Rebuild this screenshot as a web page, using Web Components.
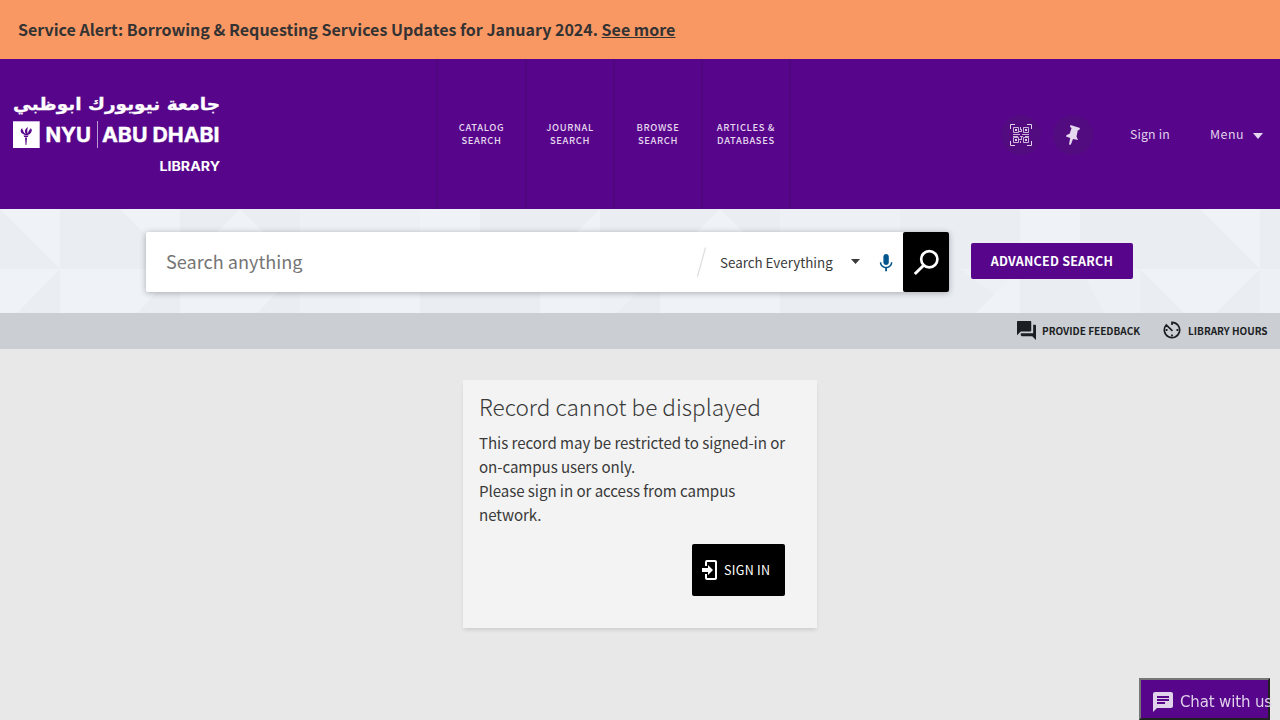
<!DOCTYPE html>
<html lang="en"><head><meta charset="utf-8"><title>NYU Abu Dhabi Library</title>
<style>
html,body{margin:0;height:100%;overflow:hidden}
body{background:#e8e8e8;color:#3a3a3a;font-family:"Noto Sans CJK SC","Open Sans",sans-serif}
</style></head><body>
<library-app></library-app>
<script>
const define=(name,html)=>customElements.define(name,class extends HTMLElement{
  constructor(){super();this.attachShadow({mode:'open'}).innerHTML=html}
});

define('service-alert',`<style>
:host{display:flex;align-items:center;height:59px;box-sizing:border-box;padding:0 18px 2px;background:#fa9864;color:#333;font-size:16.02px;font-weight:700;line-height:24px;white-space:pre}
a{text-decoration:underline;color:inherit}
</style><span><slot></slot><a>See more</a></span>`);

define('library-logo',`<style>:host{display:block;width:240px;height:150px}svg{display:block}</style>
<svg width="240" height="150" viewBox="0 59 240 150" fill="#fff">
<text x="220" y="109.500" direction="rtl" font-family="DejaVu Sans" font-weight="700" font-size="17" stroke="#fff" stroke-width=".3" textLength="207" lengthAdjust="spacingAndGlyphs">جامعة نيويورك ابوظبي</text>
<rect x="13" y="121.300" width="26.700" height="26.700"/>
<g fill="#57068c"><path d="M23.500 135.500h5l-.7 1.500h-3.600zM25 137.400h2l-.6 7.600h-.8z"/><path d="M25 135c-3-1-4-4-2-6 0 3 1 4 3 5-2-3-1-5 2-7-1 3-1 5 0 7 0-2 1-4 3-6 0 4-1 6-3 7z"/><path d="M22 133.500c-2-2-1.500-4.500.5-5.500-1 2 0 4 1.500 5.500zM29 134.500c2-1 3-3 3-6-1 2-3 3-4 5z"/></g>
<text x="45.500" y="142" font-family="Inter" font-weight="700" font-size="20" stroke="#fff" stroke-width=".4" textLength="45.500" lengthAdjust="spacingAndGlyphs">NYU</text>
<rect x="97" y="121" width="1" height="27" opacity=".6"/>
<text x="102" y="142" font-family="Inter" font-weight="700" font-size="20" stroke="#fff" stroke-width=".4" textLength="117.500" lengthAdjust="spacingAndGlyphs">ABU DHABI</text>
<text x="159.500" y="171" font-family="Inter" font-weight="700" font-size="12.500" textLength="60.500" lengthAdjust="spacingAndGlyphs">LIBRARY</text>
</svg>`);

define('nav-link',`<style>
:host{display:flex;width:88px;box-sizing:border-box;border-right:2px solid #50067f;align-items:center;justify-content:center;text-align:center;font-size:9.400px;line-height:13px;font-weight:500;letter-spacing:.65px;color:#e6daee}
:host(:first-child){border-left:2px solid #50067f;width:91px}
</style><span><slot></slot></span>`);

define('round-button',`<style>
:host{display:flex;width:40px;height:40px;border-radius:50%;background:#530b80;align-items:center;justify-content:center}
</style><slot></slot>`);

define('site-header',`<style>
:host{display:flex;height:150px;background:#57068c;color:#e0d2ea}
nav{display:flex;margin-left:196px}
.user{display:flex;align-items:center;margin-left:auto;font-size:12.500px;letter-spacing:.5px;line-height:20px;padding-right:17px;white-space:nowrap}
round-button{margin-top:2px}
round-button+round-button{margin-left:12px}
.in{margin-left:37px;width:80px;font-size:12.300px;letter-spacing:.15px}
.menu{width:43px;font-size:12.400px}
svg{display:block}
.caret{margin-top:3px}
</style>
<library-logo></library-logo>
<nav><nav-link>CATALOG<br>SEARCH</nav-link><nav-link>JOURNAL<br>SEARCH</nav-link><nav-link>BROWSE<br>SEARCH</nav-link><nav-link>ARTICLES &amp;<br>DATABASES</nav-link></nav>
<div class="user">
<round-button><svg width="22" height="22" viewBox="0 0 22 22" fill="none" stroke="#e0d2ea"><path d="M.5 5V.5H5M17 .5h4.500V5M21.500 17v4.500H17M5 21.500H.5V17"/><path stroke-opacity=".85" d="M3.500 3.500h5v5h-5zM13.500 3.500h5v5h-5zM3.500 13.500h5v5h-5zM13.500 13.500h5v5h-5zM10.500 3v3M11.500 5v3M9 7.500h2M3 10.500h7M12 10.500h7M3 12.500h5M10 12.500h3M15 12.500h4M11.500 13v3M9 15.500h2M10.500 17v2"/><path fill="#e0d2ea" stroke="none" d="M5 5h2v2H5zM15 5h2v2h-2zM5 15h2v2H5zM15 15h2v2h-2z"/></svg></round-button>
<round-button><svg width="20" height="20" viewBox="0 0 20 20" fill="#e5d8ef"><path d="M7.500 0l9.500 3-.8 2.200-1.300-.1-1.400 6.400 1.500 3.500-5-1-2.200 5.800-1.800-.4 1.200-6.300L3 11.500l.6-1.500 3-1.200L8.600 3 7 2z"/></svg></round-button>
<span class="in">Sign in</span><span class="menu">Menu</span>
<svg class="caret" width="10" height="6" viewBox="0 0 10 6"><path fill="#e5d8ef" d="M0 0h10L5 6z"/></svg>
</div>`);

define('search-box',`<style>
:host{display:flex;width:803px;height:60px;box-sizing:border-box;background:#fff;border-radius:2px;box-shadow:0 1px 6px rgba(0,0,0,.3);align-items:center;color:#3a3a3a}
.q{margin-left:20px;width:531px;font-size:18.100px;line-height:28px;padding-bottom:2px;color:#757575}
.scope{margin-left:14px;width:131px;font-size:13.360px;line-height:20px;padding-top:2px;white-space:nowrap}
.mic{margin:2px 0 0 16px}
button{display:flex;align-items:center;justify-content:center;border:0;padding:0;width:46px;height:60px;background:#000;border-radius:2px;margin-left:auto}
svg{display:block}
.caret{margin-bottom:2px}
</style>
<span class="q">Search anything</span>
<svg width="9" height="30" viewBox="0 0 9 30"><path d="M8.500.5L.5 29.500" stroke="#ddd" stroke-width="1.200"/></svg>
<span class="scope">Search Everything</span>
<svg class="caret" width="9" height="5" viewBox="0 0 9 5"><path fill="#3a3a3a" d="M0 0h9L4.500 5z"/></svg>
<svg class="mic" width="20" height="22" viewBox="2 1 20 22"><g fill="#00558c" transform="translate(1.300 1.300) scale(.9)"><path d="M12 14c1.700 0 3-1.300 3-3V5c0-1.700-1.300-3-3-3S9 3.300 9 5v6c0 1.700 1.300 3 3 3z"/><path d="M17.300 11c0 3-2.500 5.100-5.300 5.100S6.700 14 6.700 11H5c0 3.400 2.700 6.200 6 6.700V21h2v-3.300c3.300-.5 6-3.300 6-6.700z"/></g></svg>
<button aria-label="Search"><svg width="26" height="28" viewBox="0 0 26 28" fill="none" stroke="#fff"><circle cx="16.300" cy="11.300" r="8.100" stroke-width="2.700"/><path d="M11 17L1.800 26" stroke-width="3"/></svg></button>`);

define('search-band',`<style>
:host{display:grid;height:104px;background:#edf0f5}
.art,.row{grid-area:1/1}
.art{display:block}
.row{display:flex;padding:23px 0 0 146px;align-items:flex-start;z-index:1}
.adv{display:flex;align-items:center;justify-content:center;margin:11px 0 0 22px;width:162px;height:36px;line-height:36px;box-sizing:border-box;padding-bottom:1px;background:#57068c;color:#fff;border-radius:2px;font-size:12.500px;font-weight:700;letter-spacing:.22px;white-space:nowrap}
</style>
<svg class="art" width="1280" height="104" viewBox="0 0 1280 104">
<g fill="#eaedf2"><path d="M0 0L60 60H0zM60 0h60l60 60H60zM180 0h60l-60 60zM180 0h60v60h-60zM240 0h60v60zM60 60v44H17zM180 60v44h-43zM300 60v44h-43zM420 60h120v44H420zM480 0h240v60H480zM660 60v44h-43zM720 0h60v60zM780 60h120v44H780zM900 0h120v60H900zM900 60h60l60 44H900zM1080 0h120l60 60h-180zM1020 60h60l24 44h-84zM1140 60l44 44h-44zM1260 60v44h-44zM1260 0h20v60h-20z"/></g>
<g fill="#eff3f8"><path d="M0 0h60v60zM120 0h60v60zM0 60h60L17 104H0zM60 60h60v44H60zM120 60h60l-43 44h-17zM180 60h60v44h-60zM180 60l60-60v60zM240 0l60 60h-60zM240 60h60l-43 44h-17zM360 60h60v44h-60zM420 0h60v60h-60zM540 60l60-60v60zM540 60h60v44h-60zM660 60h120v44H660zM660 60l60-60 60 60zM1020 0h60v60h-60zM1020 60v44h-44zM1140 60h120l-44 44h-32zM1200 0h60v60z"/></g>
</svg>
<div class="row"><search-box></search-box><span class="adv">ADVANCED SEARCH</span></div>`);

define('quick-links',`<style>
:host{display:flex;height:36px;background:#cbced3;align-items:center;justify-content:flex-end;padding-right:12px;color:#1b1e23;font-size:10.020px;font-weight:700;line-height:16px;white-space:nowrap}
svg{display:block;margin-bottom:2px}
.f{width:98px;margin:0 23px 0 6px}.h{width:80px;margin-left:7px}
</style>
<svg width="19" height="19" viewBox="2 2 20 20" fill="currentColor"><path d="M21 6h-2v9H6v2c0 .550.450 1 1 1h11l4 4V7c0-.550-.450-1-1-1zm-4 6V3c0-.550-.450-1-1-1H3c-.550 0-1 .450-1 1v14l4-4h10c.550 0 1-.450 1-1z"/></svg>
<span class="f">PROVIDE FEEDBACK</span>
<svg width="18" height="18" viewBox="2 2 20 20" fill="none" stroke="currentColor"><path stroke-width="1.900" d="M12 6.500V3.500a8.500 8.500 0 1 1-6.400 2.900L12.500 13"/><path fill="currentColor" stroke="none" d="M11 17h2v2h-2zM17 11h2v2h-2zM5 11h2v2H5z"/></svg>
<span class="h">LIBRARY HOURS</span>`);

define('record-notice',`<style>
:host{display:block;box-sizing:border-box;width:354px;height:248px;margin:31px auto 0;padding:9px 16px;background:#f3f3f3;box-shadow:0 3px 4px -1px rgba(0,0,0,.12)}
h1{margin:0;font-size:22.600px;font-weight:300;line-height:36px;white-space:nowrap}
p{margin:5px 0 0;font-size:15.100px;letter-spacing:-.06px;line-height:24px;white-space:nowrap}
button{display:flex;align-items:center;width:93px;height:52px;margin:18px 0 0 213px;padding:0 0 0 10px;border:0;border-radius:2px;background:#000;color:#fff;font:400 12.500px/20px "Noto Sans CJK SC",sans-serif;letter-spacing:.3px}
svg{display:block;margin-right:7px}
</style>
<h1>Record cannot be displayed</h1>
<p>This record may be restricted to signed-in or<br>on-campus users only.<br>Please sign in or access from campus<br>network.</p>
<button><svg width="15" height="20" viewBox="0 0 15 20" fill="none" stroke="#fff" stroke-width="2"><path d="M4 6V2.200C4 1.500 4.500 1 5 1h8c.6 0 1 .5 1 1v16c0 .6-.4 1-1 1H5c-.6 0-1-.5-1-1v-4"/><path fill="#fff" stroke="none" d="M0 8h6V5l5 5-5 5v-3H0z"/></svg>SIGN IN</button>`);

define('chat-button',`<style>
:host{position:fixed;left:1139px;top:678px;display:flex;box-sizing:border-box;width:131px;height:42px;border:2px solid;border-color:#767676 #212121 #212121 #767676;background:#57068c;color:#dfd2ea;font:15px/20px "DejaVu Sans",sans-serif;letter-spacing:-.15px;padding:12px 0 0 12px;white-space:nowrap}
svg{flex:none}span{margin-left:7px}
</style><svg width="20" height="20" viewBox="2 2 20 20" fill="currentColor"><path d="M20 2H4c-1.100 0-2 .900-2 2v18l4-4h14c1.100 0 2-.900 2-2V4c0-1.100-.900-2-2-2zM6 9h12v2H6zm8 5H6v-2h8zm4-6H6V6h12z"/></svg><span>Chat with us</span>`);

define('library-app',`<style>:host{display:block}</style>
<service-alert>Service Alert: Borrowing &amp; Requesting Services Updates for January 2024. </service-alert>
<site-header></site-header><search-band></search-band><quick-links></quick-links>
<record-notice></record-notice><chat-button></chat-button>`);
</script></body></html>
